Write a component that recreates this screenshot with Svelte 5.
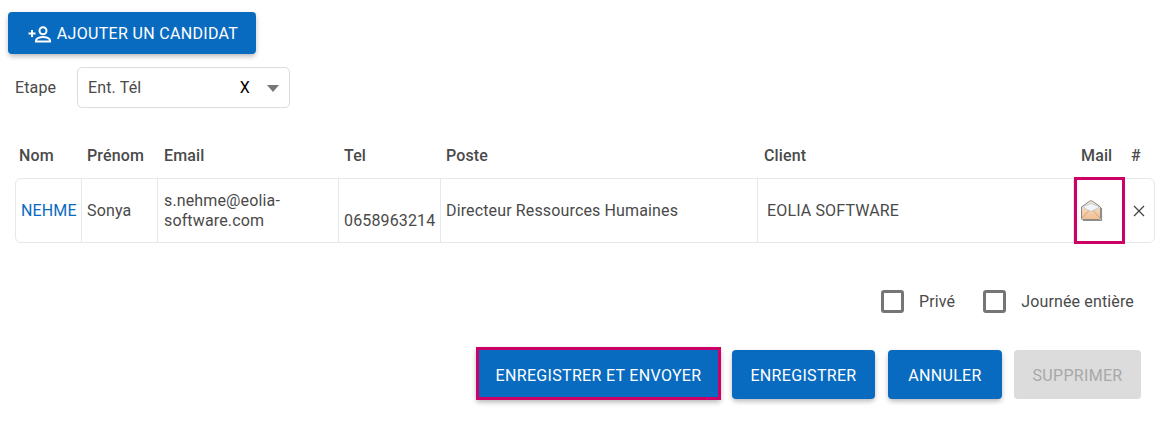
<script>
  const columns = ['Nom', 'Prénom', 'Email', 'Tel', 'Poste', 'Client', 'Mail', '#']
</script>

<div class="page">
  <button class="btn add">
    <svg width="24" height="24" viewBox="0 0 24 24" fill="none" stroke="#fff" stroke-width="2" aria-hidden="true">
      <path d="M5 9v7M1.500 12.500h7" />
      <circle cx="16" cy="9.800" r="3.500" />
      <path d="M9 20.500v-1c0-2.200 4-3.600 7-3.600s7 1.400 7 3.600v1z" />
    </svg>
    Ajouter un candidat
  </button>

  <div class="step">
    <span class="step-label">Etape</span>
    <div class="select">
      <span class="select-value">Ent. Tél</span>
      <span class="select-clear">X</span>
      <span class="select-arrow"></span>
    </div>
  </div>

  <div class="table-head cols">
    {#each columns as c}
      <span>{c}</span>
    {/each}
  </div>

  <div class="row cols">
    <div class="cell name"><a href="#nehme">NEHME</a></div>
    <div class="cell">Sonya</div>
    <div class="cell email">s.nehme@eolia-software.com</div>
    <div class="cell tel">0658963214</div>
    <div class="cell">Directeur Ressources Humaines</div>
    <div class="cell client">EOLIA SOFTWARE</div>
    <div class="cell mail">
      <svg width="22" height="21" viewBox="0 0 22 21" aria-hidden="true">
        <defs>
          <linearGradient id="env" x1="0" y1="0" x2="0" y2="1">
            <stop offset="0" stop-color="#f6e6d4" />
            <stop offset="1" stop-color="#f0c093" />
          </linearGradient>
        </defs>
        <path d="M.5 7 8.500 1.200Q10 .4 11.500 1.200L19.500 7V18.500Q19.500 19.500 18.500 19.500H1.500Q.5 19.500 .5 18.500z" fill="url(#env)" stroke="#8c8780" stroke-width="1" />
        <path d="M2.500 6.500 10 3.500 17.500 6.500 17 8 10 11.500 3 8z" fill="#f2f6fb" stroke="#b4c2d0" stroke-width=".7" />
        <path d="M1 18 8 10.500M19 18 12 10.500" stroke="#d9a273" stroke-width="1" fill="none" />
        <path d="M20.500 8V20.500H2" stroke="#8f8f8f" stroke-width="1.200" fill="none" />
      </svg>
    </div>
    <div class="cell remove">
      <svg width="12" height="12" viewBox="0 0 12 12" aria-hidden="true">
        <path d="M1 1 11 11M11 1 1 11" stroke="#444" stroke-width="1.300" fill="none" />
      </svg>
    </div>
  </div>

  <div class="checks">
    <label class="check"><span class="box"></span>Privé</label>
    <label class="check"><span class="box"></span>Journée entière</label>
  </div>

  <div class="actions">
    <button class="btn send">Enregistrer et envoyer</button>
    <button class="btn save">Enregistrer</button>
    <button class="btn cancel">Annuler</button>
    <button class="btn delete" disabled>Supprimer</button>
  </div>
</div>

<style>
  :global(body) {
    background: #fff;
  }

  .page {
    width: 1174px;
    height: 429px;
    box-sizing: border-box;
    padding: 12px 0 0 8px;
    font-family: Roboto, "Liberation Sans", sans-serif;
    font-size: 16px;
    letter-spacing: 0.14px;
    color: #4a4a4a;
    overflow: hidden;
  }

  .btn {
    display: flex;
    align-items: center;
    justify-content: center;
    border: 0;
    border-radius: 4px;
    padding: 0;
    background: #086bbf;
    color: #fff;
    font-family: inherit;
    font-size: 16px;
    font-weight: 450;
    letter-spacing: 0.32px;
    text-transform: uppercase;
    box-shadow: 0 3px 5px -1px rgba(0, 0, 0, 0.2), 0 2px 6px rgba(0, 0, 0, 0.12);
  }

  .add {
    width: 248px;
    height: 42px;
    gap: 6px;
    padding-left: 1px;
  }

  .step {
    display: flex;
    align-items: center;
    margin: 13px 0 0 7px;
    gap: 21px;
  }

  .step-label {
    width: 41px;
  }

  .select {
    display: flex;
    align-items: center;
    box-sizing: border-box;
    width: 213px;
    height: 41px;
    padding: 0 10px;
    border: 1px solid #dcdcdc;
    border-radius: 5px;
  }

  .select-value {
    flex: 1;
  }

  .select-clear {
    color: #000;
    margin-right: 17px;
  }

  .select-arrow {
    width: 0;
    height: 0;
    border-left: 6px solid transparent;
    border-right: 6px solid transparent;
    border-top: 7px solid #777;
    margin-top: 2px;
  }

  .cols {
    display: grid;
    grid-template-columns: 66px 76px 181px 102px 317px 316px 51px 30px;
    margin-left: 7px;
    width: 1140px;
  }

  .table-head {
    margin-top: 37px;
    height: 21px;
    padding-bottom: 12px;
    align-items: center;
    font-weight: 500;
  }

  .table-head span {
    padding-left: 6px;
  }

  .table-head span:nth-child(1) {
    padding-left: 4px;
  }

  .table-head span:nth-child(3),
  .table-head span:nth-child(6),
  .table-head span:nth-child(8) {
    padding-left: 7px;
  }

  .table-head span:nth-child(7) {
    padding-left: 8px;
  }

  .row {
    box-sizing: border-box;
    height: 65px;
    border: 1px solid #e8e8e8;
    border-radius: 6px;
    line-height: 20px;
  }

  .cell {
    display: flex;
    align-items: center;
    padding-left: 5px;
    border-right: 1px solid #e8e8e8;
  }

  .email {
    padding-right: 30px;
    overflow-wrap: anywhere;
    padding-left: 6px;
  }

  .name a {
    color: #086bbf;
    text-decoration: none;
  }

  .tel {
    align-items: flex-end;
    padding: 0 0 11px 5px;
  }

  .client {
    padding-left: 9px;
  }

  .mail {
    margin: -2px 0;
    padding: 0 0 0 4px;
    border: 3px solid #cc0066;
  }

  .remove {
    justify-content: center;
    padding: 0 3px 0 0;
    border: 0;
  }

  .checks {
    display: flex;
    justify-content: flex-end;
    margin: 47px 40px 0 0;
    gap: 28px;
  }

  .check {
    display: flex;
    align-items: center;
    gap: 15px;
  }

  .box {
    box-sizing: border-box;
    width: 23px;
    height: 23px;
    border: 3px solid #757575;
    border-radius: 3px;
  }

  .actions {
    display: flex;
    align-items: flex-start;
    justify-content: flex-end;
    margin: 34px 33px 0 0;
  }

  .actions .btn {
    height: 49px;
    margin-top: 3px;
    padding-top: 1px;
  }

  .actions .send {
    box-sizing: content-box;
    width: 239px;
    height: 44px;
    margin-top: 0;
    margin-right: 11px;
    padding-top: 3px;
    border: 3px solid #cc0066;
    border-radius: 0;
  }

  .save {
    width: 143px;
    margin-right: 13px;
  }

  .cancel {
    width: 114px;
    margin-right: 12px;
  }

  .delete {
    width: 127px;
    background: #dcdcdc;
    color: #a8a8a8;
    box-shadow: none;
  }
</style>
